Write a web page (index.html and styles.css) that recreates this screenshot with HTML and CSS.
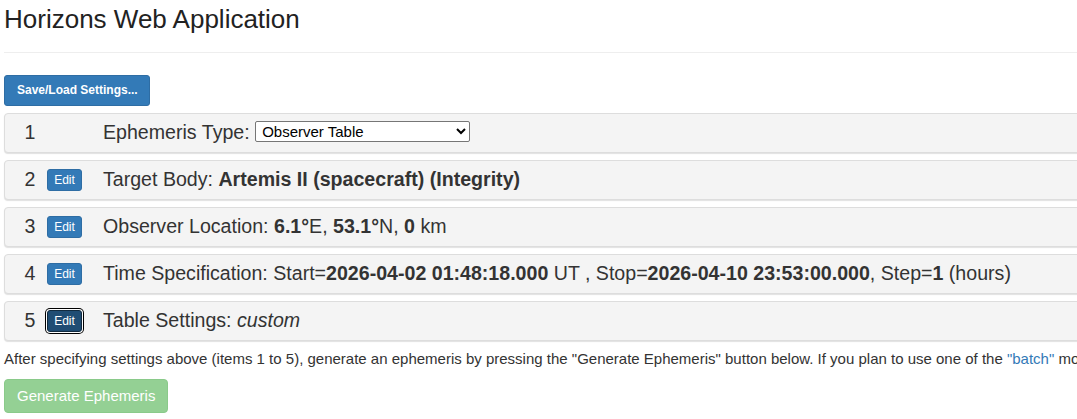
FILE: index.html
```html
<!DOCTYPE html>
<html>
<head>
<meta charset="utf-8">
<title>Horizons Web Application</title>
<link rel="stylesheet" href="styles.css">
</head>
<body>
<div class="page">
  <h1 class="title">Horizons Web Application</h1>
  <hr class="rule">
  <button class="btn btn-primary btn-sm">Save/Load Settings...</button>
  <div class="panels">
    <div class="panel">
      <span class="num">1</span>
      <span class="edit-cell"></span>
      <span class="label">Ephemeris Type: <select class="type-select">
          <option>Observer Table</option>
          <option>Vector Table</option>
          <option>Osculating Orbital Elements</option>
        </select></span>
    </div>
    <div class="panel">
      <span class="num">2</span>
      <span class="edit-cell"><button class="btn btn-primary btn-xs">Edit</button></span>
      <span class="label">Target Body: <b>Artemis II (spacecraft) (Integrity)</b></span>
    </div>
    <div class="panel">
      <span class="num">3</span>
      <span class="edit-cell"><button class="btn btn-primary btn-xs">Edit</button></span>
      <span class="label">Observer Location: <b>6.1°</b>E, <b>53.1°</b>N, <b>0</b> km</span>
    </div>
    <div class="panel">
      <span class="num">4</span>
      <span class="edit-cell"><button class="btn btn-primary btn-xs">Edit</button></span>
      <span class="label">Time Specification: Start=<b>2026-04-02 01:48:18.000</b> UT , Stop=<b>2026-04-10 23:53:00.000</b>, Step=<b>1</b> (hours)</span>
    </div>
    <div class="panel">
      <span class="num">5</span>
      <span class="edit-cell"><button class="btn btn-primary btn-xs is-focused">Edit</button></span>
      <span class="label">Table Settings: <i>custom</i></span>
    </div>
  </div>
  <p class="note">After specifying settings above (items 1 to 5), generate an ephemeris by pressing the "Generate Ephemeris" button below. If you plan to use one of the <a href="#">"batch"</a> modes, please review the documentation first.</p>
  <button class="btn btn-success btn-md" disabled>Generate Ephemeris</button>
</div>
</body>
</html>
```
FILE: styles.css
```css
html, body {
  margin: 0;
  padding: 0;
  overflow: hidden;
  background: #fff;
}
body {
  font-family: "Liberation Sans", Arial, sans-serif;
  color: #333;
  font-size: 15px;
  line-height: 1.42857;
}
.page {
  width: 1400px;
  padding: 0 4px;
}
.title {
  margin: 0;
  padding-top: 2px;
  font-size: 26px;
  font-weight: 400;
  line-height: 34px;
  color: #222;
}
.rule {
  margin: 16px 0 22px;
  border: 0;
  border-top: 1px solid #eee;
}
.btn {
  display: inline-block;
  font-family: "Liberation Sans", Arial, sans-serif;
  border: 1px solid transparent;
  cursor: pointer;
  white-space: nowrap;
}
.btn-primary {
  background: #337ab7;
  border-color: #2e6da4;
  color: #fff;
}
.btn-sm {
  font-size: 12px;
  font-weight: 700;
  line-height: 19px;
  padding: 5px 11px 5px 12px;
  border-radius: 3px;
}
.btn-xs {
  font-size: 12px;
  line-height: 18px;
  padding: 1px 5px;
  border-radius: 3px;
}
.btn-xs.is-focused {
  background: #204d74;
  border-color: #122b40;
  box-shadow: 0 0 0 1px #fff, 0 0 0 2px #000;
}
.btn-md {
  font-size: 15px;
  line-height: 20px;
  padding: 6px 12px;
  border-radius: 4px;
}
.btn-success {
  background: #5cb85c;
  border-color: #4cae4c;
  color: #fff;
}
.btn-success:disabled {
  opacity: 0.65;
  cursor: not-allowed;
}
.panels {
  margin-top: 7px;
  display: flex;
  flex-direction: column;
  gap: 7px;
}
.panel {
  display: flex;
  align-items: center;
  height: 38px;
  background: #f4f4f4;
  border: 1px solid #ddd;
  border-radius: 4px;
  box-shadow: 0 1px 1px rgba(0, 0, 0, 0.12);
  padding-left: 15px;
  font-size: 19.6px;
}
.num {
  width: 20px;
  text-align: center;
}
.edit-cell {
  width: 35px;
  margin-left: 7px;
  display: flex;
}
.edit-cell .btn {
  width: 35px;
  padding: 1px 0;
}
.label {
  margin-left: 21px;
  white-space: nowrap;
}
.type-select {
  width: 215px;
  height: 21px;
  vertical-align: 2px;
  font-family: "Liberation Sans", Arial, sans-serif;
  font-size: 15px;
  color: #000;
  background: #fff;
  border: 1px solid #767676;
  border-radius: 2px;
  padding: 0 2px;
}
.note {
  margin: 7px 0 10px;
  white-space: nowrap;
}
.note a {
  color: #337ab7;
  text-decoration: none;
}
```
